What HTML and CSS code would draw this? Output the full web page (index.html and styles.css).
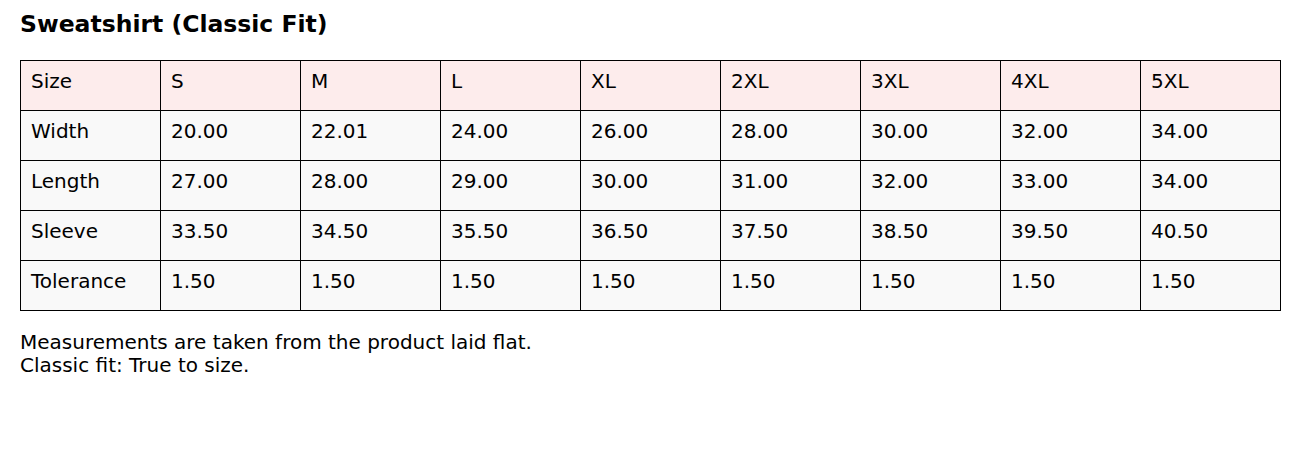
FILE: index.html
```html
<!DOCTYPE html>
<html>
<head>
<meta charset="utf-8">
<link rel="stylesheet" href="styles.css">
</head>
<body>
<div class="page">
  <h1 class="title">Sweatshirt (Classic Fit)</h1>
  <table class="chart">
    <tr class="head"><td>Size</td><td>S</td><td>M</td><td>L</td><td>XL</td><td>2XL</td><td>3XL</td><td>4XL</td><td>5XL</td></tr>
    <tr><td>Width</td><td>20.00</td><td>22.01</td><td>24.00</td><td>26.00</td><td>28.00</td><td>30.00</td><td>32.00</td><td>34.00</td></tr>
    <tr><td>Length</td><td>27.00</td><td>28.00</td><td>29.00</td><td>30.00</td><td>31.00</td><td>32.00</td><td>33.00</td><td>34.00</td></tr>
    <tr><td>Sleeve</td><td>33.50</td><td>34.50</td><td>35.50</td><td>36.50</td><td>37.50</td><td>38.50</td><td>39.50</td><td>40.50</td></tr>
    <tr><td>Tolerance</td><td>1.50</td><td>1.50</td><td>1.50</td><td>1.50</td><td>1.50</td><td>1.50</td><td>1.50</td><td>1.50</td></tr>
  </table>
  <div class="notes">
    <div>Measurements are taken from the product laid flat.</div>
    <div>Classic fit: True to size.</div>
  </div>
</div>
</body>
</html>
```
FILE: styles.css
```css
html, body {
  margin: 0;
  padding: 0;
  background: #ffffff;
}
.page {
  padding: 10px 20px;
  font-family: "DejaVu Sans", sans-serif;
  color: #000;
}
.title {
  margin: 0 0 22px 0;
  font-size: 23.5px;
  font-weight: bold;
  line-height: 28px;
}
.chart {
  border-collapse: collapse;
  width: 1261px;
  table-layout: fixed;
  font-size: 20px;
}
.chart td {
  border: 1px solid #000;
  height: 50px;
  padding: 9px 10px 0 10px;
  box-sizing: border-box;
  background: #f9f9f9;
  vertical-align: top;
  line-height: 23px;
}
.chart .head td {
  background: #fdecec;
}
.notes {
  margin-top: 20px;
  font-size: 20px;
  line-height: 23px;
}
```
